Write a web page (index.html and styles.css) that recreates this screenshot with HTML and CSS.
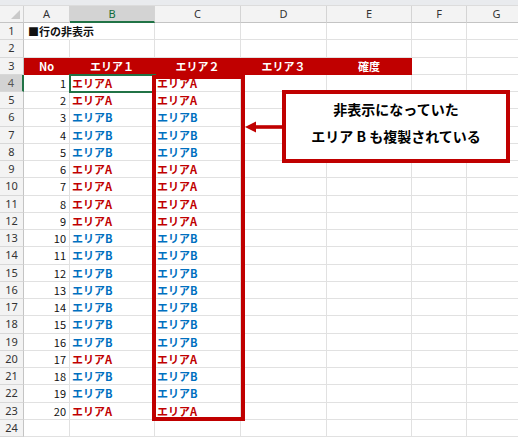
FILE: index.html
```html
<!DOCTYPE html>
<html lang="ja">
<head>
<meta charset="utf-8">
<title>行の非表示</title>
<link rel="stylesheet" href="styles.css">
</head>
<body>
<div class="page">
  <div class="topstrip"></div>
  <div class="sheet">
    <div class="corner"><span class="tri"></span></div>
    <div class="ch">A</div><div class="ch sel">B</div><div class="ch">C</div><div class="ch">D</div><div class="ch">E</div><div class="ch">F</div><div class="ch">G</div>

    <div class="rh">1</div><div class="c title">■行の非表示</div><div class="c"></div><div class="c"></div><div class="c"></div><div class="c"></div><div class="c"></div><div class="c"></div>
    <div class="rh">2</div><div class="c"></div><div class="c"></div><div class="c"></div><div class="c"></div><div class="c"></div><div class="c"></div><div class="c"></div>
    <div class="rh">3</div><div class="c hd">No</div><div class="c hd">エリア１</div><div class="c hd">エリア２</div><div class="c hd">エリア３</div><div class="c hd">確度</div><div class="c"></div><div class="c"></div>

    <div class="rh sel">4</div><div class="c num">1</div><div class="c ta">エリアA</div><div class="c ta">エリアA</div><div class="c"></div><div class="c"></div><div class="c"></div><div class="c"></div>
    <div class="rh">5</div><div class="c num">2</div><div class="c ta">エリアA</div><div class="c ta">エリアA</div><div class="c"></div><div class="c"></div><div class="c"></div><div class="c"></div>
    <div class="rh">6</div><div class="c num">3</div><div class="c tb">エリアB</div><div class="c tb">エリアB</div><div class="c"></div><div class="c"></div><div class="c"></div><div class="c"></div>
    <div class="rh">7</div><div class="c num">4</div><div class="c tb">エリアB</div><div class="c tb">エリアB</div><div class="c"></div><div class="c"></div><div class="c"></div><div class="c"></div>
    <div class="rh">8</div><div class="c num">5</div><div class="c tb">エリアB</div><div class="c tb">エリアB</div><div class="c"></div><div class="c"></div><div class="c"></div><div class="c"></div>
    <div class="rh">9</div><div class="c num">6</div><div class="c ta">エリアA</div><div class="c ta">エリアA</div><div class="c"></div><div class="c"></div><div class="c"></div><div class="c"></div>
    <div class="rh">10</div><div class="c num">7</div><div class="c ta">エリアA</div><div class="c ta">エリアA</div><div class="c"></div><div class="c"></div><div class="c"></div><div class="c"></div>
    <div class="rh">11</div><div class="c num">8</div><div class="c ta">エリアA</div><div class="c ta">エリアA</div><div class="c"></div><div class="c"></div><div class="c"></div><div class="c"></div>
    <div class="rh">12</div><div class="c num">9</div><div class="c ta">エリアA</div><div class="c ta">エリアA</div><div class="c"></div><div class="c"></div><div class="c"></div><div class="c"></div>
    <div class="rh">13</div><div class="c num">10</div><div class="c tb">エリアB</div><div class="c tb">エリアB</div><div class="c"></div><div class="c"></div><div class="c"></div><div class="c"></div>
    <div class="rh">14</div><div class="c num">11</div><div class="c tb">エリアB</div><div class="c tb">エリアB</div><div class="c"></div><div class="c"></div><div class="c"></div><div class="c"></div>
    <div class="rh">15</div><div class="c num">12</div><div class="c tb">エリアB</div><div class="c tb">エリアB</div><div class="c"></div><div class="c"></div><div class="c"></div><div class="c"></div>
    <div class="rh">16</div><div class="c num">13</div><div class="c tb">エリアB</div><div class="c tb">エリアB</div><div class="c"></div><div class="c"></div><div class="c"></div><div class="c"></div>
    <div class="rh">17</div><div class="c num">14</div><div class="c tb">エリアB</div><div class="c tb">エリアB</div><div class="c"></div><div class="c"></div><div class="c"></div><div class="c"></div>
    <div class="rh">18</div><div class="c num">15</div><div class="c tb">エリアB</div><div class="c tb">エリアB</div><div class="c"></div><div class="c"></div><div class="c"></div><div class="c"></div>
    <div class="rh">19</div><div class="c num">16</div><div class="c tb">エリアB</div><div class="c tb">エリアB</div><div class="c"></div><div class="c"></div><div class="c"></div><div class="c"></div>
    <div class="rh">20</div><div class="c num">17</div><div class="c ta">エリアA</div><div class="c ta">エリアA</div><div class="c"></div><div class="c"></div><div class="c"></div><div class="c"></div>
    <div class="rh">21</div><div class="c num">18</div><div class="c tb">エリアB</div><div class="c tb">エリアB</div><div class="c"></div><div class="c"></div><div class="c"></div><div class="c"></div>
    <div class="rh">22</div><div class="c num">19</div><div class="c tb">エリアB</div><div class="c tb">エリアB</div><div class="c"></div><div class="c"></div><div class="c"></div><div class="c"></div>
    <div class="rh">23</div><div class="c num">20</div><div class="c ta">エリアA</div><div class="c ta">エリアA</div><div class="c"></div><div class="c"></div><div class="c"></div><div class="c"></div>
    <div class="rh">24</div><div class="c"></div><div class="c"></div><div class="c"></div><div class="c"></div><div class="c"></div><div class="c"></div><div class="c"></div>
  </div>

  <div class="selection"></div>
  <div class="hilite"></div>
  <svg class="arrow" width="40" height="14" viewBox="0 0 40 14">
    <polygon points="0,7 11,1.5 11,12.5" fill="#c00000"/>
    <rect x="9" y="5.2" width="31" height="3.6" fill="#c00000"/>
  </svg>
  <div class="callout">
    <div>非表示になっていた</div>
    <div>エリア B も複製されている</div>
  </div>
</div>
</body>
</html>
```

FILE: styles.css
```css
* { box-sizing: border-box; }
html, body { margin: 0; padding: 0; background: #fff; }
body { width: 518px; height: 437px; overflow: hidden; font-family: "Noto Sans CJK JP", "Noto Sans", sans-serif; }
.page { position: relative; width: 518px; height: 437px; overflow: hidden; }
.topstrip { height: 6px; background: #e9ebee; border-bottom: 1px solid #dcdcdc; }
.sheet {
  display: grid;
  grid-template-columns: 24px 46px 85px 86px 86px 85px 55px 60px;
  grid-template-rows: 17px;
  grid-auto-rows: 17.25px;
  width: 527px;
}
.corner { position: relative; background: #f3f3f3; border-right: 1px solid #d0d0d0; border-bottom: 1px solid #c4c4c4; }
.tri { position: absolute; right: 3px; bottom: 3px; width: 0; height: 0; border-left: 9px solid transparent; border-bottom: 9px solid #c9c9c9; }
.ch {
  background: #f3f3f3; color: #333; font-family: "Noto Sans", sans-serif; font-size: 11px;
  text-align: center; line-height: 16px;
  border-right: 1px solid #d4d4d4; border-bottom: 1px solid #c4c4c4;
}
.ch.sel { background: #d3d3d3; color: #0f6b3a; border-bottom: 2px solid #217346; }
.rh {
  background: #f3f3f3; color: #333; font-family: "Noto Sans", sans-serif; font-size: 11px;
  text-align: center; line-height: 16px;
  border-right: 1px solid #c4c4c4; border-bottom: 1px solid #d8d8d8;
}
.rh.sel { background: #d3d3d3; color: #555; border-right: 2px solid #217346; }
.c {
  font-size: 11px; line-height: 16px; white-space: nowrap; padding: 0 2px;
  border-right: 1px solid #e1e1e1; border-bottom: 1px solid #e1e1e1;
  overflow: visible;
}
.title { font-weight: 700; color: #111; padding-left: 4px; border-right-color: transparent; position: relative; z-index: 1; }
.hd { background: #c00000; color: #fff; font-weight: 700; text-align: center; border-right-color: #c00000; border-bottom-color: #c00000; }
.num { text-align: right; padding-right: 3px; color: #111; }
.ta { color: #c00000; font-weight: 700; }
.tb { color: #0070c0; font-weight: 700; }
.selection {
  position: absolute; left: 69px; top: 74px; width: 87px; height: 19px;
  border: 2px solid #217346;
}
.hilite {
  position: absolute; left: 152px; top: 75px; width: 93px; height: 346px;
  border: 4px solid #c00000;
}
.arrow { position: absolute; left: 245px; top: 120px; }
.callout {
  position: absolute; left: 282px; top: 90px; width: 228px; height: 73px;
  border: 4px solid #c00000; background: #fff;
  display: flex; flex-direction: column; align-items: center;
  padding-top: 2px;
  font-size: 14px; font-weight: 700; line-height: 27px; color: #000;
}
```
